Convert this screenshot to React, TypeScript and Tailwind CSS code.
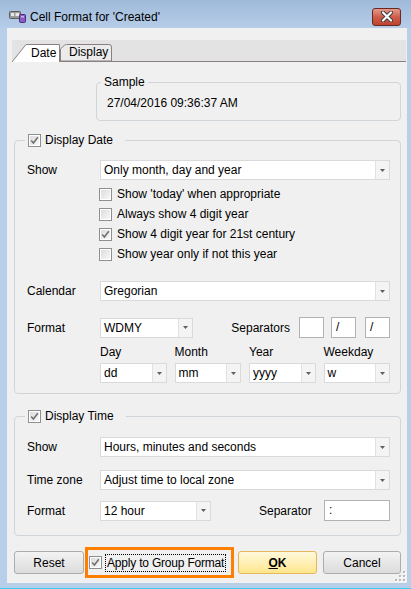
import React from "react";

function Check({ checked = false }: { checked?: boolean }) {
  return (
    <span className="flex h-[13px] w-[13px] shrink-0 items-center justify-center border border-[#8e8f8f] bg-white p-[1px]">
      <span className="flex h-full w-full items-center justify-center bg-linear-to-br from-[#dcdcdc] to-[#f8f8f8]">
        {checked && (
          <svg width="9" height="9" viewBox="0 0 9 9">
            <path d="M1.2 4.6 L3.4 7 L7.8 1.2" fill="none" stroke="#6e6e6e" strokeWidth="1.5" />
          </svg>
        )}
      </span>
    </span>
  );
}

function Combo({ value, className = "" }: { value: string; className?: string }) {
  return (
    <div className={`flex h-[20px] border border-[#dadada] bg-white ${className}`}>
      <span className="flex-1 truncate pl-[3px] leading-[18px]">{value}</span>
      <span className="flex w-[14px] items-center justify-center border-l border-[#e2e2e2] bg-[#f4f4f4]">
        <svg width="5" height="3" viewBox="0 0 5 3">
          <path d="M0 0H5L2.5 3Z" fill="#5f5f5f" />
        </svg>
      </span>
    </div>
  );
}

function TextBox({ value, className = "" }: { value: string; className?: string }) {
  return (
    <div className={`h-[21px] border border-[#b0b2b6] bg-white pl-[4px] leading-[19px] ${className}`}>
      {value}
    </div>
  );
}

const Row: React.FC<{ label: string; className?: string; children: React.ReactNode }> = ({
  label,
  className = "",
  children,
}) => (
  <div className={`flex items-center ${className}`}>
    <span className="w-[73px] shrink-0">{label}</span>
    <div className="flex flex-1 items-center">{children}</div>
  </div>
);

export default function App() {
  return (
    <div className="flex h-[589px] w-[411px] flex-col overflow-hidden border-b border-[#3ad0f2] bg-[#b8cfea] font-['Liberation_Sans',Arial,sans-serif] text-[12px] text-black">
      {/* title bar */}
      <div className="flex h-[28px] shrink-0 items-center bg-linear-to-b from-[#9fbad9] to-[#b6cde9] pl-[9px] pr-[10px] pt-[5px]">
        <svg width="17" height="12" viewBox="0 0 17 12" className="mr-[4px]">
          <rect x="0.5" y="0.5" width="11" height="7" rx="1" fill="#9a9a9a" stroke="#5c5c5c" />
          <rect x="2" y="2" width="3" height="3" fill="#e8e8e8" />
          <rect x="6.5" y="2" width="3.5" height="3" fill="#e8e8e8" />
          <rect x="10.5" y="3.5" width="6" height="8" rx="1" fill="#8a5cc4" stroke="#4b2d78" />
          <rect x="12" y="5" width="3" height="1.5" fill="#c9b1ec" />
        </svg>
        <span className="leading-[14px]">Cell Format for 'Created'</span>
        <div className="ml-auto flex h-[18px] w-[29px] items-center justify-center rounded-[3px] border border-[#6a2a21] bg-linear-to-b from-[#e49a8c] via-[#cf5c49] to-[#bd432f]">
          <svg width="14" height="11" viewBox="0 0 14 11">
            <path d="M3 1.5 L11 9.5 M11 1.5 L3 9.5" stroke="#3b3b3b" strokeWidth="4" strokeLinecap="round" />
            <path d="M3 1.5 L11 9.5 M11 1.5 L3 9.5" stroke="#ffffff" strokeWidth="2.2" strokeLinecap="round" />
          </svg>
        </div>
      </div>

      {/* body */}
      <div className="flex min-h-0 flex-1 px-[7px] pb-[5px]">
        <div className="relative flex flex-1 flex-col bg-[#f0f0f0]">
          {/* tabs */}
          <div className="ml-[5px] mr-[1px] mt-[12px] flex h-[22px] items-end bg-[#e3e3e3]">
            <div className="relative z-10 h-[18px] w-[48px]">
              <svg className="absolute inset-0" width="48" height="18" viewBox="0 0 48 18">
                <path d="M0 18 L14 0.5 H47.5 V18 Z" fill="#ffffff" />
                <path d="M0 18 L14 0.5 H47.5 V18" fill="none" stroke="#8b8080" />
              </svg>
              <span className="relative block pl-[19px] leading-[18px]">Date</span>
            </div>
            <div className="relative h-[18px] w-[52px] border-b border-[#8b8080]">
              <svg className="absolute left-0 top-0" width="52" height="17" viewBox="0 0 52 17">
                <path d="M0.5 17 V5 L4.5 1.2 Q5.3 0.5 6.5 0.5 H49 Q51.5 0.5 51.5 3 V17 Z" fill="#ebebeb" stroke="#8b8080" />
              </svg>
              <span className="relative block pl-[9px] leading-[17px]">Display</span>
            </div>
            <div className="h-[1px] flex-1 bg-[#8b8080]" />
          </div>

          {/* page */}
          <div className="flex flex-col pl-[7px] pr-[6px]">
            <fieldset className="ml-[82px] mt-[13px] rounded-[4px] border border-[#d0d5d9] pb-[10px] pl-[10px] pt-[7px]">
              <legend className="ml-[-6px] px-[3px] leading-[14px]">Sample</legend>
              <div className="leading-[14px]">27/04/2016 09:36:37 AM</div>
            </fieldset>

            {/* Display Date */}
            <fieldset className="mt-[12px] rounded-[4px] border border-[#d0d5d9] pb-[10px] pl-[12px] pr-[10px] pt-[13px]">
              <legend className="ml-[-2px] pl-[3px] pr-[12px]">
                <span className="flex h-[14px] items-center gap-[4px]">
                  <Check checked />
                  <span>Display Date</span>
                </span>
              </legend>
              <Row label="Show">
                <Combo value="Only month, day and year" className="flex-1" />
              </Row>
              <div className="ml-[72px] mt-[4px] flex flex-col">
                {[
                  ["Show 'today' when appropriate", false],
                  ["Always show 4 digit year", false],
                  ["Show 4 digit year for 21st century", true],
                  ["Show year only if not this year", false],
                ].map(([t, c]) => (
                  <div key={t as string} className="flex h-[20px] items-center gap-[5px]">
                    <Check checked={c as boolean} />
                    <span>{t as string}</span>
                  </div>
                ))}
              </div>
              <Row label="Calendar" className="mt-[17px]">
                <Combo value="Gregorian" className="flex-1" />
              </Row>
              <Row label="Format" className="mt-[16px]">
                <Combo value="WDMY" className="w-[93px]" />
                <span className="ml-auto">Separators</span>
                <TextBox value="" className="ml-[9px] w-[25px]" />
                <TextBox value="/" className="ml-[7px] w-[25px]" />
                <TextBox value="/" className="ml-[9px] w-[25px]" />
              </Row>
              <div className="ml-[73px] mt-[7px] grid grid-cols-4 gap-x-[8px]">
                <span className="leading-[14px]">Day</span>
                <span className="leading-[14px]">Month</span>
                <span className="leading-[14px]">Year</span>
                <span className="leading-[14px]">Weekday</span>
                <Combo value="dd" className="mt-[4px]" />
                <Combo value="mm" className="mt-[4px]" />
                <Combo value="yyyy" className="mt-[4px]" />
                <Combo value="w" className="mt-[4px]" />
              </div>
            </fieldset>

            {/* Display Time */}
            <fieldset className="mt-[15px] rounded-[4px] border border-[#d0d5d9] pb-[14px] pl-[12px] pr-[10px] pt-[14px]">
              <legend className="ml-[-2px] pl-[3px] pr-[12px]">
                <span className="flex h-[14px] items-center gap-[4px]">
                  <Check checked />
                  <span>Display Time</span>
                </span>
              </legend>
              <Row label="Show">
                <Combo value="Hours, minutes and seconds" className="flex-1" />
              </Row>
              <Row label="Time zone" className="mt-[13px]">
                <Combo value="Adjust time to local zone" className="flex-1" />
              </Row>
              <Row label="Format" className="mt-[10px]">
                <Combo value="12 hour" className="w-[111px]" />
                <span className="ml-[48px]">Separator</span>
                <TextBox value=":" className="ml-auto h-[20px] w-[66px] leading-[18px]" />
              </Row>
            </fieldset>

            {/* buttons */}
            <div className="mt-[11px] flex items-center">
              <button className="h-[23px] w-[70px] rounded-[3px] border border-[#acacac] bg-linear-to-b from-[#f3f3f3] to-[#dcdcdc]">
                Reset
              </button>
              <div className="ml-[1px] flex h-[31px] w-[149px] shrink-0 items-center overflow-hidden border-[3px] border-[#ff8000] pl-[1px]">
                <Check checked />
                <span className="ml-[3px] whitespace-nowrap border border-dotted border-black px-[1px] leading-[16px] tracking-[-0.2px]">
                  Apply to Group Format
                </span>
              </div>
              <button className="ml-[4px] h-[23px] w-[79px] rounded-[3px] border border-[#e3b75a] bg-linear-to-b from-[#fff9dc] to-[#ffe68a] font-bold">
                <span className="underline">O</span>K
              </button>
              <button className="ml-[6px] h-[23px] w-[78px] rounded-[3px] border border-[#acacac] bg-linear-to-b from-[#f3f3f3] to-[#dcdcdc]">
                Cancel
              </button>
            </div>
          </div>

          {/* size grip */}
          <svg className="absolute bottom-[1px] right-[1px]" width="11" height="11" viewBox="0 0 11 11">
            {[
              [8, 0],
              [4, 4],
              [8, 4],
              [0, 8],
              [4, 8],
              [8, 8],
            ].map(([x, y]) => (
              <g key={`${x}-${y}`}>
                <rect x={x + 1} y={y + 1} width="2" height="2" fill="#ffffff" />
                <rect x={x} y={y} width="2" height="2" fill="#b9b9b9" />
              </g>
            ))}
          </svg>
        </div>
      </div>
    </div>
  );
}
